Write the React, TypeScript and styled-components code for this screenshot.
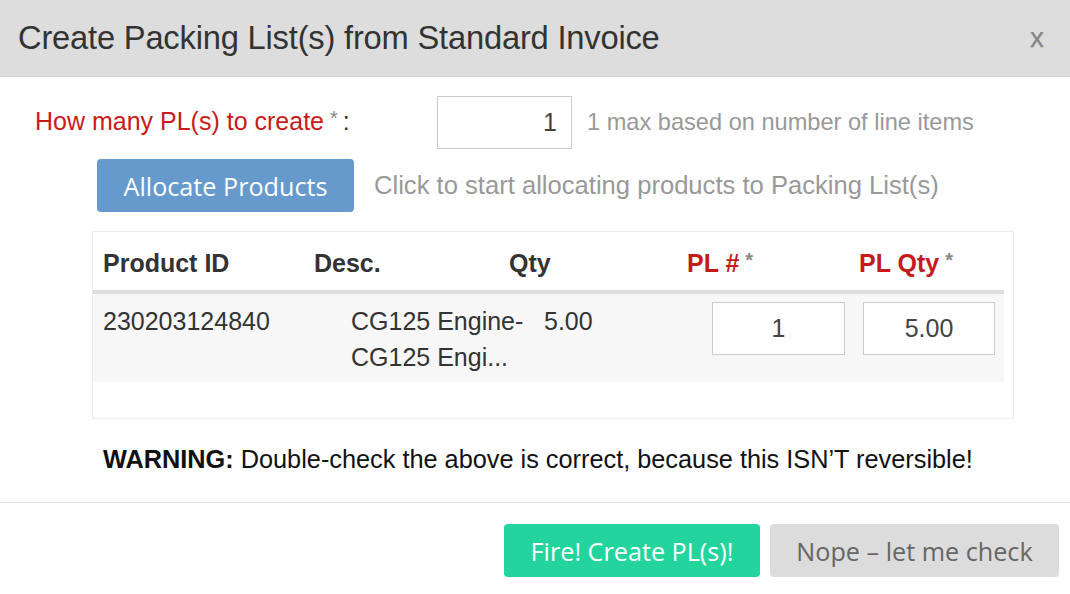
import styled, { createGlobalStyle } from "styled-components"

const GlobalStyle = createGlobalStyle`
	html, body {
		margin: 0;
		padding: 0;
		background: #fff;
	}
	* {
		box-sizing: border-box;
	}
`

const Modal = styled.div`
	width: 1070px;
	height: 594px;
	background: #fff;
	font-family: "Liberation Sans", Arial, sans-serif;
	color: #333;
	display: flex;
	flex-direction: column;
	overflow: hidden;
`

const Header = styled.div`
	height: 77px;
	flex-shrink: 0;
	background: #dddddd;
	border-bottom: 1px solid #d2d2d2;
	display: flex;
	align-items: center;
	justify-content: space-between;
	padding: 0 26px 0 18px;
`

const Title = styled.h3`
	margin: 0;
	font-weight: normal;
	font-size: 32.7px;
	color: #333;
	letter-spacing: -0.2px;
`

const Close = styled.button`
	border: none;
	background: none;
	padding: 0;
	font-family: "Liberation Sans", Arial, sans-serif;
	font-size: 28px;
	color: #858585;
	text-shadow: 0 1px 1px rgba(0, 0, 0, 0.15);
	cursor: pointer;
`

const Body = styled.div`
	padding: 19px 0 0;
	display: flex;
	flex-direction: column;
`

const FormRow = styled.div<{ $indent: number }>`
	display: flex;
	align-items: center;
	padding-left: ${(p) => p.$indent}px;
	margin-bottom: 10px;
`

const Label = styled.label`
	width: 402px;
	font-size: 25px;
	color: #c91a1a;
	margin-top: -2px;
`

const Star = styled.span`
	color: #888;
	font-size: 20px;
	vertical-align: top;
	margin-left: 6px;
`

const Colon = styled.span`
	color: #333;
	margin-left: 5px;
`

const NumInput = styled.input<{ $w: number; $align?: string }>`
	width: ${(p) => p.$w}px;
	height: 53px;
	border: 1px solid #ccc;
	border-radius: 0;
	background: #fff;
	font-family: "Liberation Sans", Arial, sans-serif;
	font-size: 25px;
	color: #444;
	text-align: ${(p) => p.$align || "center"};
	padding: 0 14px;
	outline: none;
`

const Hint = styled.span<{ $size: number; $gap: number }>`
	margin-left: ${(p) => p.$gap}px;
	font-size: ${(p) => p.$size}px;
	color: #999;
`

const Button = styled.button<{ $bg: string; $fg: string; $w: number }>`
	width: ${(p) => p.$w}px;
	height: 53px;
	border: none;
	border-radius: 4px;
	background: ${(p) => p.$bg};
	color: ${(p) => p.$fg};
	font-family: "Open Sans", sans-serif;
	font-size: 25.2px;
	cursor: pointer;
	padding: 0;
`

const TableBox = styled.div`
	margin: 9px 56px 0 92px;
	height: 188px;
	border: 1px solid #eee;
	padding-right: 9px;
`

const HeadRow = styled.div`
	display: grid;
	grid-template-columns: 211px 195px 178px 172px 1fr;
	align-items: center;
	height: 62px;
	padding: 5px 0 0 10px;
	border-bottom: 4px solid #dedede;
	font-size: 25px;
	font-weight: bold;
	color: #333;
`

const HeadCell = styled.div<{ $red?: boolean }>`
	color: ${(p) => (p.$red ? "#c41a1a" : "#333")};
`

const DataRow = styled.div`
	display: grid;
	grid-template-columns: 248px 193px 168px 151px 1fr;
	align-items: start;
	height: 88px;
	background: #f7f7f7;
	padding: 9px 0 0 10px;
	font-size: 25px;
	color: #333;
`

const Cell = styled.div`
	line-height: 36px;
`

const Desc = styled.div`
	line-height: 36px;
	width: 180px;
	overflow: hidden;
`

const RowInput = styled(NumInput)`
	margin-top: -1px;
`

const Warning = styled.p`
	margin: 24px 0 0 103px;
	font-size: 25.3px;
	color: #111;
	line-height: 32px;
`

const Footer = styled.div`
	margin-top: 27px;
	border-top: 1px solid #e5e5e5;
	padding: 21px 11px 0 0;
	display: flex;
	justify-content: flex-end;
	gap: 10px;
`

export default function App() {
	return (
		<Modal>
			<GlobalStyle />
			<Header>
				<Title>Create Packing List(s) from Standard Invoice</Title>
				<Close>x</Close>
			</Header>
			<Body>
				<FormRow $indent={35}>
					<Label>
						How many PL(s) to create<Star>*</Star>
						<Colon>:</Colon>
					</Label>
					<NumInput $w={135} $align="right" defaultValue="1" />
					<Hint $size={23.6} $gap={15}>
						1 max based on number of line items
					</Hint>
				</FormRow>
				<FormRow $indent={97}>
					<Button $bg="#6699cc" $fg="#fff" $w={257}>
						Allocate Products
					</Button>
					<Hint $size={25.6} $gap={20}>
						Click to start allocating products to Packing List(s)
					</Hint>
				</FormRow>
				<TableBox>
					<HeadRow>
						<HeadCell>Product ID</HeadCell>
						<HeadCell>Desc.</HeadCell>
						<HeadCell>Qty</HeadCell>
						<HeadCell $red>
							PL #<Star>*</Star>
						</HeadCell>
						<HeadCell $red>
							PL Qty<Star>*</Star>
						</HeadCell>
					</HeadRow>
					<DataRow>
						<Cell>230203124840</Cell>
						<Desc>
							CG125 Engine-
							<br />
							CG125 Engi...
						</Desc>
						<Cell>5.00</Cell>
						<RowInput $w={133} defaultValue="1" />
						<RowInput $w={132} defaultValue="5.00" />
					</DataRow>
				</TableBox>
				<Warning>
					<b>WARNING:</b> Double-check the above is correct, because this ISN’T reversible!
				</Warning>
				<Footer>
					<Button $bg="#23d59d" $fg="#fff" $w={256}>
						Fire! Create PL(s)!
					</Button>
					<Button $bg="#dcdcdc" $fg="#666" $w={289}>
						Nope – let me check
					</Button>
				</Footer>
			</Body>
		</Modal>
	)
}
